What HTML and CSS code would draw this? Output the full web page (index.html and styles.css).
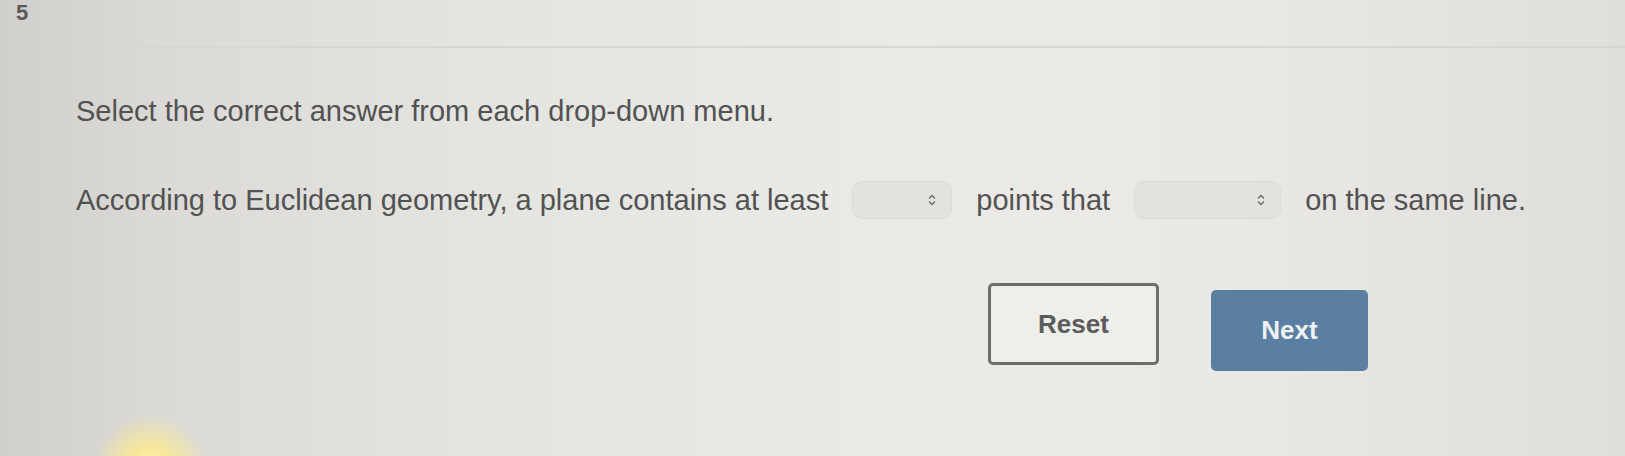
FILE: index.html
```html
<!DOCTYPE html>
<html lang="en">
<head>
  <meta charset="UTF-8">
  <title>Question 5</title>
  <link rel="stylesheet" href="styles.css">
</head>
<body>
  <div class="page">
    <div class="question-number">5</div>
    <hr class="divider">

    <p class="instructions">Select the correct answer from each drop-down menu.</p>

    <p class="statement">
      According to Euclidean geometry, a plane contains at least
      <span class="dropdown short">
        <svg class="caret" viewBox="0 0 10 14" width="10" height="14"><path d="M2 5.5 L5 2.5 L8 5.5 M2 8.5 L5 11.5 L8 8.5" fill="none" stroke="#6a6a6a" stroke-width="1.4"/></svg>
      </span>
      points that
      <span class="dropdown long">
        <svg class="caret" viewBox="0 0 10 14" width="10" height="14"><path d="M2 5.5 L5 2.5 L8 5.5 M2 8.5 L5 11.5 L8 8.5" fill="none" stroke="#6a6a6a" stroke-width="1.4"/></svg>
      </span>
      on the same line.
    </p>

    <div class="actions">
      <button class="btn reset">Reset</button>
      <button class="btn next">Next</button>
    </div>
  </div>
</body>
</html>
```

FILE: styles.css
```css
* {
  box-sizing: border-box;
  margin: 0;
  padding: 0;
}

body {
  width: 1625px;
  height: 456px;
  overflow: hidden;
  font-family: 'Liberation Sans', Arial, sans-serif;
  color: #525252;
  background:
    radial-gradient(circle at 150px 472px, rgba(255, 252, 220, 1) 0, rgba(255, 235, 140, 0.85) 22px, rgba(245, 225, 190, 0) 58px),
    linear-gradient(90deg, #d0cfcb 0%, #dbdad6 10%, #e4e4e0 30%, #eaeae6 55%, #ebe9e5 75%, #e0dedb 100%);
}

.page {
  padding: 0 0 0 16px;
}

.question-number {
  font-size: 22px;
  font-weight: bold;
  color: #5a5a5a;
  height: 42px;
}

.divider {
  border: none;
  border-top: 2px solid #d6d6d2;
  margin: 4px 0 0 90px;
}

.instructions {
  margin: 46px 0 0 60px;
  font-size: 29px;
  line-height: 34px;
}

.statement {
  display: flex;
  align-items: center;
  gap: 0 24px;
  margin: 52px 0 0 60px;
  font-size: 29px;
  line-height: 40px;
  white-space: nowrap;
}

.dropdown {
  display: inline-flex;
  align-items: center;
  justify-content: flex-end;
  height: 38px;
  border-radius: 10px;
  background: #e2e2de;
  border: 1px solid #dcdbd7;
  padding-right: 14px;
}

.dropdown.short {
  width: 100px;
}

.dropdown.long {
  width: 147px;
}

.actions {
  display: flex;
  align-items: flex-start;
  gap: 52px;
  margin: 63px 0 0 972px;
}

.btn {
  width: 171px;
  height: 82px;
  font-family: 'Liberation Sans', Arial, sans-serif;
  font-size: 26px;
  font-weight: bold;
  border-radius: 5px;
  cursor: pointer;
}

.reset {
  background: #eeeeea;
  color: #5c5c5c;
  border: 3px solid #6e6e6e;
}

.next {
  width: 157px;
  height: 81px;
  margin-top: 7px;
  background: #5b7fa0;
  color: #eef2f6;
  border: none;
}
```
